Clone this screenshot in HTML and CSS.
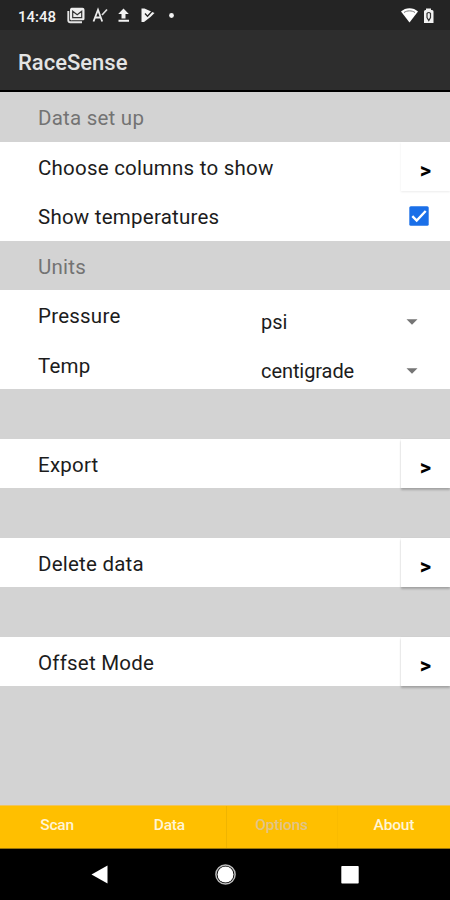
FILE: index.html
```
<!DOCTYPE html>
<html lang="en">
<head>
<meta charset="utf-8">
<title>RaceSense</title>
<link rel="stylesheet" href="styles.css">
</head>
<body>
<div class="status">
  <span class="clock">14:48</span>
  <svg class="notif" width="120" height="18" viewBox="0 0 120 18">
    <path d="M4.500 .800h11A2 2 0 0 1 17.500 2.800v9a1.500 1.500 0 0 1-1.500 1.500h-11A1.500 1.500 0 0 1 3 11.800v-9A2 2 0 0 1 4.500 .800z" fill="#ececec"/>
    <path d="M1.300 4v9.500a1.800 1.800 0 0 0 1.800 1.800H15" fill="none" stroke="#e4e4e4" stroke-width="1.900"/>
    <path d="M5.700 10.600V4.200l4.500 3.600 4.500-3.600v6.400z" fill="none" stroke="#333" stroke-width="1.200"/>
    <path d="M26.500 14.500L31 2.800l4.200 11.700M28 10.500h6" fill="none" stroke="#eee" stroke-width="1.800"/>
    <path d="M35 8L40 2.500" stroke="#ddd" stroke-width="1.700"/>
    <path d="M56.500 1.500l5.300 5.500H58.500v4.500h-4V7h-3.300zM51.500 12.800h10.500v2H51.500z" fill="#f2f2f2"/>
    <path d="M74.500 1.500h3L87.500 6l-4 4L77 15h-2.500z" fill="#f2f2f2"/>
    <path d="M78 6.500l2.500 2.700 5.500-6" fill="none" stroke="#242424" stroke-width="1.300"/>
    <circle cx="104.500" cy="8.500" r="2.400" fill="#f2f2f2"/>
  </svg>
  <svg class="system" width="36" height="18" viewBox="0 0 36 18">
    <path d="M1 4.500C5.500 0 13.500 0 18 4.500L9.500 15.500z" fill="#fff"/>
    <path d="M4 5.500C7 3.300 12 3.300 15 5.500" fill="none" stroke="#777" stroke-width="1"/>
    <path d="M24 4.500a1.500 1.500 0 0 1 1.500-1.500H26V1.500h5V3h1a1.500 1.500 0 0 1 1.500 1.500V16H24z" fill="#f2f2f2"/>
    <path d="M27 6.500q1.800-2 3.500 0v4l-1.700 3-1.800-3z" fill="none" stroke="#333" stroke-width="1.200"/>
  </svg>
</div>
<header class="appbar">RaceSense</header>
<main class="list">
  <div class="row heading">Data set up</div>
  <div class="row">Choose columns to show<button class="go faint">&gt;</button></div>
  <div class="row">Show temperatures
    <svg class="check" width="20" height="20" viewBox="0 0 20 20"><rect x=".3" y=".3" width="19.400" height="19.400" rx="1.500" fill="#1a6fe8"/><path d="M3.300 10.200l4.400 4.400 9-9.600" fill="none" stroke="#fff" stroke-width="2.400"/></svg>
  </div>
  <div class="row heading">Units</div>
  <div class="row">Pressure<span class="select">psi<svg width="12" height="6" viewBox="0 0 12 6"><path d="M.5.3h11L6 5.700z" fill="#757575"/></svg></span></div>
  <div class="row">Temp<span class="select">centigrade<svg width="12" height="6" viewBox="0 0 12 6"><path d="M.5.3h11L6 5.700z" fill="#757575"/></svg></span></div>
  <div class="row heading"></div>
  <div class="row">Export<button class="go">&gt;</button></div>
  <div class="row heading"></div>
  <div class="row">Delete data<button class="go">&gt;</button></div>
  <div class="row heading"></div>
  <div class="row">Offset Mode<button class="go">&gt;</button></div>
</main>
<nav class="tabs"><span>Scan</span><span>Data</span><span class="active">Options</span><span>About</span></nav>
<footer class="navbar">
  <svg width="450" height="51" viewBox="0 0 450 51">
    <path d="M91.500 25.500L107.500 16.500v18z" fill="#fff"/>
    <circle cx="225.500" cy="25.500" r="9.600" fill="none" stroke="#bbb" stroke-width="1.500"/>
    <circle cx="225.500" cy="25.500" r="8" fill="#fff"/>
    <rect x="341.300" y="17" width="17.400" height="17.500" rx=".8" fill="#fff"/>
  </svg>
</footer>
</body>
</html>
```
FILE: styles.css
```
* { box-sizing: border-box; }
body {
  margin: 0;
  width: 450px;
  height: 900px;
  display: flex;
  flex-direction: column;
  overflow: hidden;
  background: #d3d3d3;
  font-family: Roboto, sans-serif;
}
.status {
  height: 30px;
  display: flex;
  align-items: center;
  padding: 2px 14px 0 18px;
  background: #242424;
}
.clock { width: 49px; padding-top: 1px; color: #f2f2f2; font-size: 15px; font-weight: 500; letter-spacing: 0; }
.system { margin-left: auto; }
.appbar {
  height: 62px;
  padding: 3px 18px 0;
  border-bottom: 2px solid #000;
  background: #2d2d2d;
  color: #e4e4e4;
  font-size: 22px;
  font-weight: 500;
  line-height: 60px;
}
.list {
  flex: 1;
  display: grid;
  grid-auto-rows: 49.500px;
  align-content: start;
  padding-top: .300px;
}
.row {
  display: flex;
  justify-content: space-between;
  padding-left: 38px;
  background: #fff;
  color: #1c1c1c;
  font-size: 20.500px;
  letter-spacing: .23px;
  line-height: 52px;
}
.heading { background: #d3d3d3; color: #737373; }
.go {
  position: relative;
  z-index: 1;
  width: 49px;
  height: 49px;
  padding: 9px 0 0;
  border: 0;
  background: #fff;
  box-shadow: 0 2px 2px rgba(0, 0, 0, .22), 0 0 1px rgba(0, 0, 0, .08);
  color: #000;
  font: 700 22px Roboto, sans-serif;
}
.faint { box-shadow: 0 1px 2px rgba(0, 0, 0, .08); }
.check { margin: 15px 21.500px 0 0; }
.select {
  width: 189px;
  height: 49px;
  display: flex;
  align-items: center;
  justify-content: space-between;
  padding: 14px 32.500px 0 0;
  font-size: 20px;
  letter-spacing: -.08px;
}
.tabs {
  height: 44px;
  display: grid;
  grid-template-columns: repeat(4, 1fr);
  border-top: 1px solid #f0c45c;
  border-bottom: 1px solid #9b7608;
  background: #ffbf00;
  color: #fff5d6;
  font-size: 15.500px;
  font-weight: 500;
  letter-spacing: -.2px;
  line-height: 38px;
  text-align: center;
  padding-left: 1px;
}
.tabs .active { border-left: 1px solid #f0b400; border-right: 1px solid #fabb00; color: #dfc488; }
.navbar { height: 51px; background: #000; }
.navbar svg { display: block; }
```
